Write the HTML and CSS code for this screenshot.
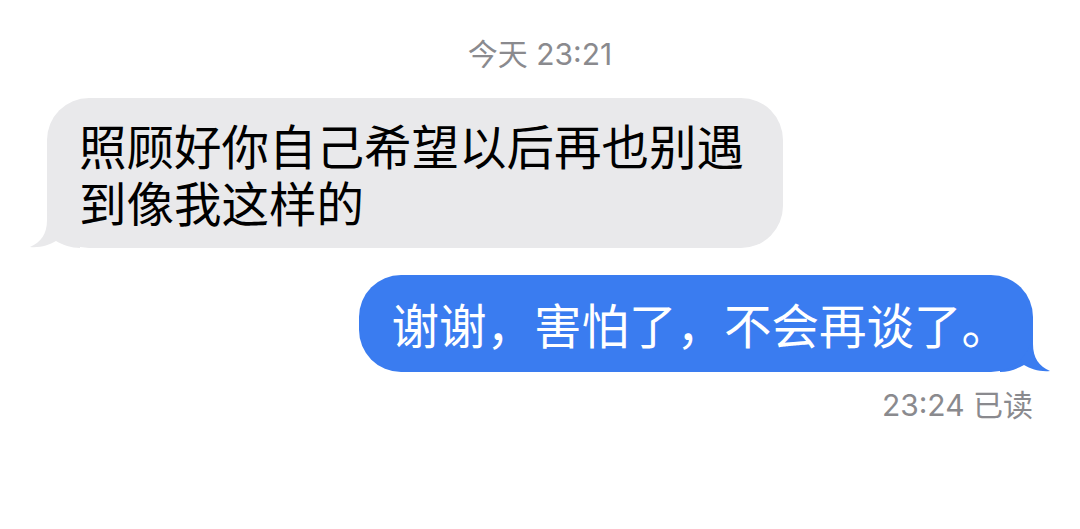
FILE: index.html
```html
<!DOCTYPE html>
<html lang="zh-CN">
<head>
    <meta charset="UTF-8">
    <meta name="viewport" content="width=device-width, initial-scale=1.0">
    <title>信息</title>
    <link rel="stylesheet" href="styles.css">
</head>
<body>
    <div class="chat">
        <div class="stamp">今天 23:21</div>

        <div class="row row-in">
            <div class="bubble bubble-in">
                照顾好你自己希望以后再也别遇到像我这样的
                <svg class="tail" width="50" height="44" viewBox="0 0 50 44">
                    <path d="M17 0 L17 16 C17 30 11 38 0 43 C10 44 19 41 26 37 C33 41 41 44 50 44 L50 0 Z"/>
                </svg>
            </div>
        </div>

        <div class="row row-out">
            <div class="bubble bubble-out">
                谢谢，害怕了，不会再谈了。
                <svg class="tail" width="50" height="44" viewBox="0 0 50 44">
                    <path d="M17 0 L17 16 C17 30 11 38 0 43 C10 44 19 41 26 37 C33 41 41 44 50 44 L50 0 Z"/>
                </svg>
            </div>
        </div>

        <div class="receipt">23:24 已读</div>
    </div>
</body>
</html>
```

FILE: styles.css
```css
* {
    margin: 0;
    padding: 0;
    box-sizing: border-box;
}

body {
    font-family: "Noto Sans CJK SC", sans-serif;
    background: #fff;
    color: #000;
}

.chat {
    display: flex;
    flex-direction: column;
    padding: 37px 47px 0 47px;
}

.stamp,
.receipt {
    font-family: Inter, "Noto Sans CJK SC", sans-serif;
    font-size: 30px;
    line-height: 34px;
    color: #8a8a8e;
}

.stamp {
    text-align: center;
}

.receipt {
    text-align: right;
    margin-top: 16px;
}

.row {
    display: flex;
}

.row-in {
    justify-content: flex-start;
    margin-top: 27px;
}

.row-out {
    justify-content: flex-end;
    margin-top: 27px;
}

.bubble {
    position: relative;
    font-size: 47.5px;
    line-height: 57px;
    border-radius: 42px;
}

.bubble-in {
    max-width: 736px;
    padding: 18px 36px 18px 32px;
    background: #e9e9eb;
}

.bubble-out {
    padding: 20px 24px 20px 33px;
    background: #3a7cf0;
    color: #fff;
}

/* tail sits behind the bubble's bottom corner */
.tail {
    position: absolute;
    bottom: 0;
    z-index: -1;
}

.bubble-in .tail {
    left: -17px;
    fill: #e9e9eb;
}

.bubble-out .tail {
    right: -17px;
    fill: #3a7cf0;
    transform: scaleX(-1);
}
```
